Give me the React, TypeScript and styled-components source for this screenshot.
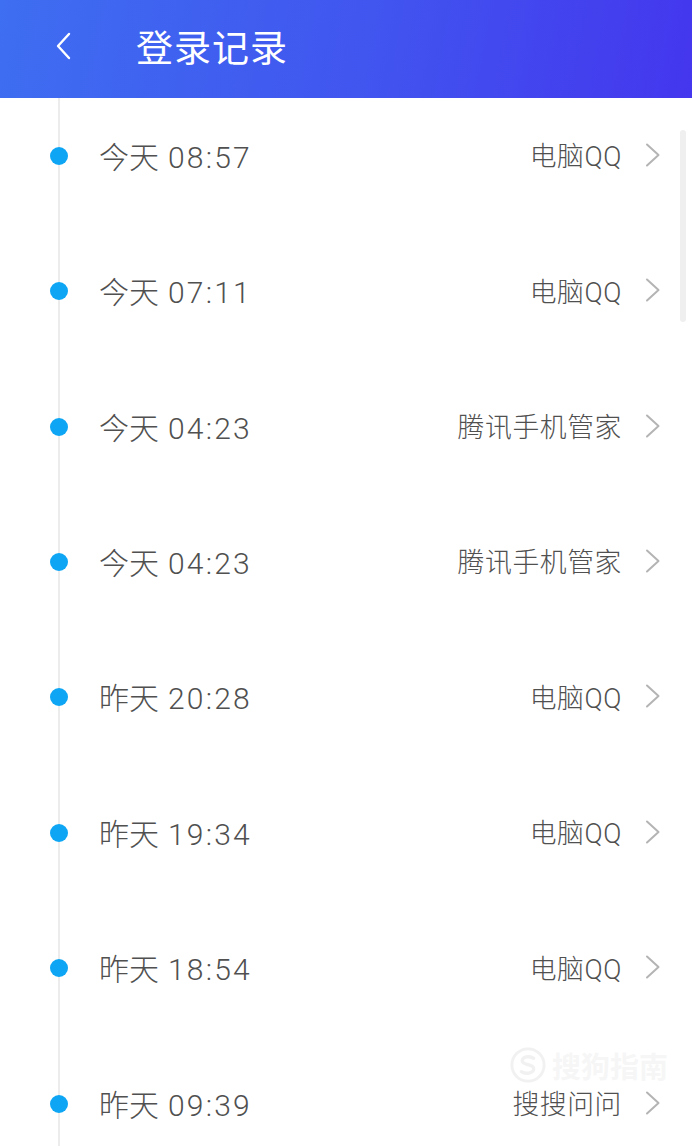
import styled, { createGlobalStyle } from "styled-components";

const GlobalStyle = createGlobalStyle`
  html, body {
    margin: 0;
    padding: 0;
    background: #ffffff;
  }
  body {
    font-family: "Roboto", "Noto Sans CJK SC", "Noto Sans", sans-serif;
  }
`;

const Page = styled.div`
  position: relative;
  width: 692px;
  height: 1146px;
  overflow: hidden;
  background: #ffffff;
`;

const Header = styled.header`
  height: 98px;
  display: flex;
  align-items: center;
  padding-bottom: 6px;
  box-sizing: border-box;
  background: linear-gradient(100deg, #3e6ef1 0%, #4154ef 55%, #4436ee 100%);
  color: #ffffff;
`;

const BackButton = styled.button`
  width: 136px;
  height: 60px;
  padding: 0 0 0 54px;
  border: none;
  background: none;
  display: flex;
  align-items: center;
  cursor: pointer;
`;

const Title = styled.h1`
  margin: 0;
  font-family: "Noto Sans CJK SC", sans-serif;
  font-size: 37px;
  font-weight: 400;
  letter-spacing: 1px;
`;

const List = styled.ul`
  list-style: none;
  margin: 0 0 0 58px;
  padding: 0;
  border-left: 2px solid #ececec;
`;

const Row = styled.li`
  height: 135.43px;
  display: flex;
  align-items: center;
  padding: 0 32px 22px 0;
  box-sizing: border-box;
`;

const Dot = styled.span`
  width: 18px;
  height: 18px;
  margin-left: -10px;
  margin-top: 2px;
  border-radius: 50%;
  background: #0ea6f4;
  flex-shrink: 0;
`;

const Time = styled.span`
  margin-left: 31px;
  font-size: 30px;
  font-weight: 300;
  color: #505050;
  flex: 1;
  display: flex;
  align-items: baseline;
  gap: 9px;
`;

const Clock = styled.span`
  letter-spacing: 2.2px;
`;

const Device = styled.span`
  font-size: 26.8px;
  font-weight: 300;
  color: #505050;
  margin-right: 23px;
  letter-spacing: 0.6px;
`;

const Scrollbar = styled.div`
  position: absolute;
  top: 130px;
  right: 6px;
  width: 6px;
  height: 192px;
  border-radius: 3px;
  background: #efefef;
`;

const Watermark = styled.div`
  position: absolute;
  right: 24px;
  bottom: 60px;
  display: flex;
  align-items: center;
  gap: 6px;
  color: rgba(236, 236, 236, 0.45);
  font-family: "Noto Sans CJK SC", sans-serif;
  font-size: 29px;
  font-weight: 700;
  pointer-events: none;
`;

const Chevron = ({ color }: { color: string }) => (
  <svg width="15" height="24" viewBox="0 0 15 24" fill="none">
    <path d="M2 1.5 L13.5 12 L2 22.5" stroke={color} strokeWidth="2" strokeLinecap="round" strokeLinejoin="round" />
  </svg>
);

const records = [
  { day: "今天", clock: "08:57", device: "电脑QQ" },
  { day: "今天", clock: "07:11", device: "电脑QQ" },
  { day: "今天", clock: "04:23", device: "腾讯手机管家" },
  { day: "今天", clock: "04:23", device: "腾讯手机管家" },
  { day: "昨天", clock: "20:28", device: "电脑QQ" },
  { day: "昨天", clock: "19:34", device: "电脑QQ" },
  { day: "昨天", clock: "18:54", device: "电脑QQ" },
  { day: "昨天", clock: "09:39", device: "搜搜问问" },
];

export default function App() {
  return (
    <Page>
      <GlobalStyle />
      <Header>
        <BackButton aria-label="返回">
          <svg width="18" height="28" viewBox="0 0 18 28" fill="none">
            <path d="M15 2 L4 14 L15 26" stroke="#ffffff" strokeWidth="2.4" strokeLinecap="round" strokeLinejoin="round" />
          </svg>
        </BackButton>
        <Title>登录记录</Title>
      </Header>
      <List>
        {records.map((r, i) => (
          <Row key={i}>
            <Dot />
            <Time>
              <span>{r.day}</span>
              <Clock>{r.clock}</Clock>
            </Time>
            <Device>{r.device}</Device>
            <Chevron color="#b4b4b4" />
          </Row>
        ))}
      </List>
      <Scrollbar />
      <Watermark>
        <svg width="36" height="36" viewBox="0 0 38 38" fill="none">
          <circle cx="19" cy="19" r="17" stroke="rgba(228,228,228,0.5)" strokeWidth="3" />
          <path d="M25 12 C21 9 12 10 13 15 C14 20 25 17 25 23 C25 28 16 29 12 26" stroke="rgba(228,228,228,0.5)" strokeWidth="3.5" strokeLinecap="round" />
        </svg>
        <span>搜狗指南</span>
      </Watermark>
    </Page>
  );
}
